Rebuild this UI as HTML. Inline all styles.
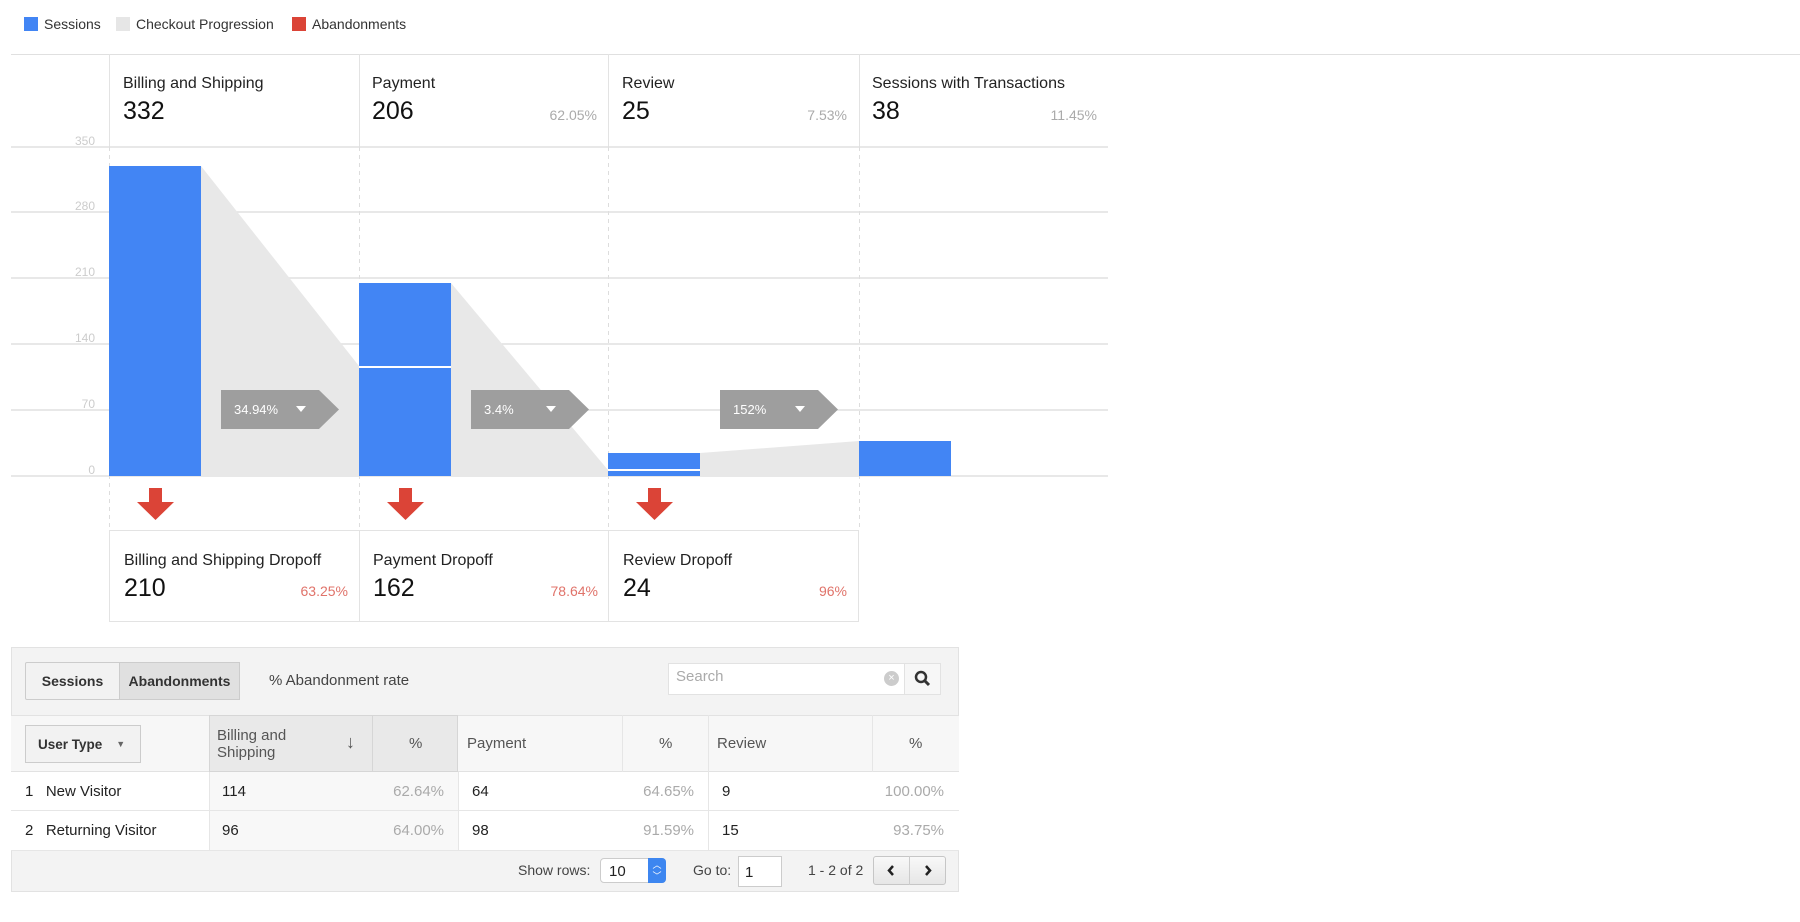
<!DOCTYPE html>
<html><head><meta charset="utf-8"><style>
*{box-sizing:border-box;margin:0;padding:0}
body{width:1800px;height:922px;background:#fff;font-family:"Liberation Sans",Arial,sans-serif;color:#222;position:relative;overflow:hidden}
.a{position:absolute;white-space:nowrap}
.lg{font-size:14px;color:#333;top:16px}
.sq{position:absolute;top:17px;width:14px;height:14px}
.t{font-size:16px;color:#222}
.n{font-size:25px;color:#111}
.p{font-size:14px;color:#aaa}
.r{font-size:14px;color:#e0736a}
.btn{position:absolute;border:1px solid #ccc;font-size:14px;font-weight:bold;color:#333;display:flex;align-items:center;justify-content:center}
.cell{position:absolute;font-size:15px}
</style></head><body>
<div class="sq" style="left:24px;background:#4285f4"></div><div class="a lg" style="left:44px">Sessions</div>
<div class="sq" style="left:116px;background:#e6e6e6"></div><div class="a lg" style="left:136px">Checkout Progression</div>
<div class="sq" style="left:292px;background:#db4437"></div><div class="a lg" style="left:312px">Abandonments</div>

<svg class="a" style="left:0;top:0" width="1800" height="640">
<line x1="11" y1="54.5" x2="1800" y2="54.5" stroke="#e0e0e0"/>
<g stroke="#e3e3e3">
<line x1="109.5" y1="54" x2="109.5" y2="147"/><line x1="359.5" y1="54" x2="359.5" y2="147"/><line x1="608.5" y1="54" x2="608.5" y2="147"/><line x1="859.5" y1="54" x2="859.5" y2="147"/>
</g>
<g stroke="#ddd" stroke-dasharray="4,4">
<line x1="109.5" y1="147" x2="109.5" y2="531"/><line x1="359.5" y1="147" x2="359.5" y2="531"/><line x1="608.5" y1="147" x2="608.5" y2="531"/><line x1="859.5" y1="147" x2="859.5" y2="531"/>
</g>
<g stroke="#e0e0e0" stroke-width="1.5">
<line x1="11" y1="147" x2="1108" y2="147"/><line x1="11" y1="212" x2="1108" y2="212"/><line x1="11" y1="278" x2="1108" y2="278"/><line x1="11" y1="344" x2="1108" y2="344"/><line x1="11" y1="410" x2="1108" y2="410"/><line x1="11" y1="476" x2="1108" y2="476"/>
</g>
<g font-size="12" fill="#ccc" text-anchor="end" font-family="Liberation Sans">
<text x="95" y="145">350</text><text x="95" y="210">280</text><text x="95" y="276">210</text><text x="95" y="342">140</text><text x="95" y="408">70</text><text x="95" y="474">0</text>
</g>
<g fill="#e8e8e8">
<polygon points="201,166 359,366 359,476 201,476"/>
<polygon points="451,283 608,470 608,476 451,476"/>
<polygon points="700,453 859,441 859,476 700,476"/>
</g>
<g fill="#4285f4">
<rect x="109" y="166" width="92" height="310"/>
<rect x="359" y="283" width="92" height="193"/>
<rect x="608" y="453" width="92" height="23"/>
<rect x="859" y="441" width="92" height="35"/>
</g>
<rect x="359" y="366" width="92" height="2" fill="#fff"/>
<rect x="608" y="469" width="92" height="2" fill="#fff"/>
<g fill="#9e9e9e">
<polygon points="221,390 319,390 339,409.5 319,429 221,429"/>
<polygon points="471,390 569,390 589,409.5 569,429 471,429"/>
<polygon points="720,390 818,390 838,409.5 818,429 720,429"/>
</g>
<g fill="#fff" font-size="13" font-family="Liberation Sans">
<text x="234" y="414">34.94%</text><text x="484" y="414">3.4%</text><text x="733" y="414">152%</text>
</g>
<g fill="#fff"><polygon points="296,406 306,406 301,412"/><polygon points="546,406 556,406 551,412"/><polygon points="795,406 805,406 800,412"/></g>
<g fill="#db4437">
<polygon points="149,488 162,488 162,502 174,502 155.5,520 137,502 149,502"/>
<polygon points="399,488 412,488 412,502 424,502 405.5,520 387,502 399,502"/>
<polygon points="648,488 661,488 661,502 673,502 654.5,520 636,502 648,502"/>
</g>
<rect x="109.5" y="530.5" width="749" height="91" fill="none" stroke="#e3e3e3"/>
<line x1="359.5" y1="531" x2="359.5" y2="622" stroke="#e3e3e3"/><line x1="608.5" y1="531" x2="608.5" y2="622" stroke="#e3e3e3"/>
</svg>

<div class="a t" style="left:123px;top:75px">Billing and Shipping</div><div class="a n" style="left:123px;top:97px">332</div>
<div class="a t" style="left:372px;top:75px">Payment</div><div class="a n" style="left:372px;top:97px">206</div><div class="a p" style="right:1203px;top:107px">62.05%</div>
<div class="a t" style="left:622px;top:75px">Review</div><div class="a n" style="left:622px;top:97px">25</div><div class="a p" style="right:953px;top:107px">7.53%</div>
<div class="a t" style="left:872px;top:75px">Sessions with Transactions</div><div class="a n" style="left:872px;top:97px">38</div><div class="a p" style="right:703px;top:107px">11.45%</div>

<div class="a t" style="left:124px;top:552px">Billing and Shipping Dropoff</div><div class="a n" style="left:124px;top:574px">210</div><div class="a r" style="right:1452px;top:583px">63.25%</div>
<div class="a t" style="left:373px;top:552px">Payment Dropoff</div><div class="a n" style="left:373px;top:574px">162</div><div class="a r" style="right:1202px;top:583px">78.64%</div>
<div class="a t" style="left:623px;top:552px">Review Dropoff</div><div class="a n" style="left:623px;top:574px">24</div><div class="a r" style="right:953px;top:583px">96%</div>

<div class="a" style="left:11px;top:647px;width:948px;height:245px;background:#f3f3f3;border:1px solid #e2e2e2"></div>
<div class="btn" style="left:25px;top:662px;width:95px;height:38px;background:#f2f2f2;border-radius:2px 0 0 2px">Sessions</div>
<div class="btn" style="left:119px;top:662px;width:121px;height:38px;background:#e0e0e0">Abandonments</div>
<div class="a" style="left:269px;top:672px;font-size:15px;color:#444">% Abandonment rate</div>
<div class="a" style="left:668px;top:663px;width:237px;height:32px;background:#fff;border:1px solid #e2e2e2"></div>
<div class="a" style="left:676px;top:668px;font-size:15px;color:#aaa">Search</div>
<div class="a" style="left:884px;top:671px;width:15px;height:15px;border-radius:50%;background:#ccc;color:#fff;font-size:11px;line-height:15px;text-align:center">×</div>
<div class="a" style="left:904px;top:663px;width:37px;height:32px;background:#f7f7f7;border:1px solid #e2e2e2"></div>
<svg class="a" style="left:913px;top:669px" width="20" height="20"><circle cx="8" cy="8" r="5" fill="none" stroke="#333" stroke-width="2.5"/><line x1="11.5" y1="11.5" x2="16" y2="16" stroke="#333" stroke-width="3"/></svg>

<div class="a" style="left:11px;top:715px;width:948px;height:57px;background:#f7f7f7;border-top:1px solid #e2e2e2;border-bottom:1px solid #e2e2e2"></div>
<div class="a" style="left:209px;top:715px;width:249px;height:57px;background:#e9e9e9;border:1px solid #d6d6d6"></div>
<div class="a" style="left:372px;top:715px;width:1px;height:57px;background:#d6d6d6"></div>
<div class="a" style="left:622px;top:715px;width:1px;height:57px;background:#e6e6e6"></div>
<div class="a" style="left:708px;top:715px;width:1px;height:57px;background:#e6e6e6"></div>
<div class="a" style="left:872px;top:715px;width:1px;height:57px;background:#e6e6e6"></div>
<div class="btn" style="left:25px;top:725px;width:116px;height:38px;background:#f2f2f2;justify-content:flex-start;padding-left:12px;font-size:13.5px">User Type<span style="margin-left:14px;font-size:9px;color:#666">▼</span></div>
<div class="a" style="left:217px;top:727px;font-size:15px;color:#555;line-height:17px;white-space:normal;width:100px">Billing and Shipping</div>
<div class="a" style="left:346px;top:732px;font-size:18px;color:#555">↓</div>
<div class="a" style="left:409px;top:735px;font-size:15px;color:#555">%</div>
<div class="a" style="left:467px;top:735px;font-size:15px;color:#555">Payment</div>
<div class="a" style="left:659px;top:735px;font-size:15px;color:#555">%</div>
<div class="a" style="left:717px;top:735px;font-size:15px;color:#555">Review</div>
<div class="a" style="left:909px;top:735px;font-size:15px;color:#555">%</div>

<div class="a" style="left:11px;top:772px;width:948px;height:78px;background:#fff"></div>
<div class="a" style="left:209px;top:772px;width:249px;height:78px;background:#f8f8f8"></div>
<div class="a" style="left:11px;top:810px;width:948px;height:1px;background:#e6e6e6"></div>
<div class="a" style="left:209px;top:772px;width:1px;height:78px;background:#e6e6e6"></div>
<div class="a" style="left:458px;top:772px;width:1px;height:78px;background:#e6e6e6"></div>
<div class="a" style="left:708px;top:772px;width:1px;height:78px;background:#e6e6e6"></div>
<div class="a" style="left:11px;top:850px;width:948px;height:1px;background:#e6e6e6"></div>

<div class="cell a" style="left:25px;top:783px">1&nbsp;&nbsp;&nbsp;New Visitor</div>
<div class="cell a" style="left:222px;top:783px">114</div><div class="cell a" style="right:1356px;top:783px;color:#aaa">62.64%</div>
<div class="cell a" style="left:472px;top:783px">64</div><div class="cell a" style="right:1106px;top:783px;color:#aaa">64.65%</div>
<div class="cell a" style="left:722px;top:783px">9</div><div class="cell a" style="right:856px;top:783px;color:#aaa">100.00%</div>
<div class="cell a" style="left:25px;top:822px">2&nbsp;&nbsp;&nbsp;Returning Visitor</div>
<div class="cell a" style="left:222px;top:822px">96</div><div class="cell a" style="right:1356px;top:822px;color:#aaa">64.00%</div>
<div class="cell a" style="left:472px;top:822px">98</div><div class="cell a" style="right:1106px;top:822px;color:#aaa">91.59%</div>
<div class="cell a" style="left:722px;top:822px">15</div><div class="cell a" style="right:856px;top:822px;color:#aaa">93.75%</div>

<div class="a" style="left:518px;top:862px;font-size:14px;color:#444">Show rows:</div>
<div class="a" style="left:600px;top:858px;width:66px;height:25px;background:#fff;border:1px solid #ccc;border-radius:4px;font-size:15px;padding:4px 8px">10</div>
<div class="a" style="left:648px;top:858px;width:18px;height:25px;background:#3d86f0;border-radius:0 4px 4px 0;color:#fff;font-size:9px;text-align:center;line-height:11px;padding-top:2px">︿<br>﹀</div>
<div class="a" style="left:693px;top:862px;font-size:14px;color:#444">Go to:</div>
<div class="a" style="left:738px;top:856px;width:44px;height:31px;background:#fff;border:1px solid #ccc;font-size:15px;padding:7px 6px">1</div>
<div class="a" style="left:808px;top:862px;font-size:14px;color:#444">1 - 2 of 2</div>
<div class="a" style="left:873px;top:856px;width:73px;height:29px;background:linear-gradient(#f8f8f8,#e6e6e6);border:1px solid #c6c6c6;border-radius:3px"></div>
<div class="a" style="left:909px;top:856px;width:1px;height:29px;background:#ccc"></div>
<svg class="a" style="left:873px;top:856px" width="73" height="29"><polyline points="20,10 16,14.5 20,19" fill="none" stroke="#222" stroke-width="2.5"/><polyline points="53,10 57,14.5 53,19" fill="none" stroke="#222" stroke-width="2.5"/></svg>
</body></html>
